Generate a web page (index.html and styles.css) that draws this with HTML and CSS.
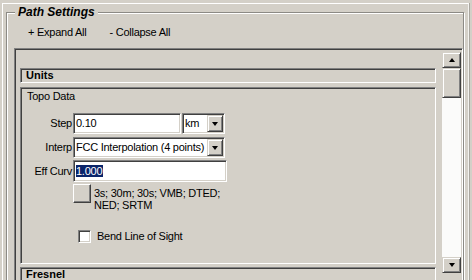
FILE: index.html
```html
<!DOCTYPE html>
<html>
<head>
<meta charset="utf-8">
<link rel="stylesheet" href="styles.css">
</head>
<body>
<div class="window">
  <div class="group">
    <div class="legend">Path Settings</div>
    <div class="actions">
      <span class="action">+ Expand All</span>
      <span class="action">- Collapse All</span>
    </div>
    <div class="panel">
      <div class="content">
        <div class="bar">Units</div>
        <div class="section">
          <div class="section-title">Topo Data</div>
          <div class="form">
            <div class="row">
              <span class="lbl">Step</span>
              <div class="edit step">0.10</div>
              <div class="combo km"><span class="val">km</span><span class="drop"><i class="arrow-down"></i></span></div>
            </div>
            <div class="row">
              <span class="lbl">Interp</span>
              <div class="combo interp"><span class="val">FCC Interpolation (4 points)</span><span class="drop"><i class="arrow-down"></i></span></div>
            </div>
            <div class="row row-curv">
              <span class="lbl">Eff Curv</span>
              <div class="edit curv"><span class="sel">1.000</span></div>
            </div>
          </div>
          <div class="btn-row">
            <div class="sqbtn"></div>
            <div class="btn-text">3s; 30m; 30s; VMB; DTED;<br>NED; SRTM</div>
          </div>
          <div class="check-row">
            <span class="checkbox"></span>
            <span class="check-label">Bend Line of Sight</span>
          </div>
        </div>
        <div class="bar">Fresnel</div>
      </div>
      <div class="scrollbar">
        <div class="sb-btn"><i class="arrow-up"></i></div>
        <div class="sb-thumb"></div>
        <div class="sb-track"></div>
        <div class="sb-btn"><i class="arrow-down"></i></div>
      </div>
    </div>
  </div>
</div>
</body>
</html>
```
FILE: styles.css
```css
html, body {
  margin: 0;
  padding: 0;
}
body {
  width: 472px;
  height: 280px;
  overflow: hidden;
  background: #d4d0c8;
  font-family: "Liberation Sans", Arial, sans-serif;
  font-size: 11px;
  line-height: 13px;
  letter-spacing: -0.25px;
  color: #000;
}
.window {
  margin: 3px 3px 0 2px;
  border-top: 1px solid #fff;
  border-left: 1px solid #fff;
  border-right: 1px solid #f4f3f0;
  box-shadow: 1px 0 0 #a9a69f;
  height: 300px;
}
.group {
  position: relative;
  margin: 8px 4px 0 3px;
  border: 1px solid #8c8a85;
  box-shadow: inset 1px 1px 0 #fff, 1px 1px 0 #fff;
  padding-top: 13px;
  height: 300px;
}
.legend {
  position: absolute;
  left: 8px;
  top: -8px;
  padding: 0 3px;
  background: #d4d0c8;
  font-size: 12px;
  line-height: 14px;
  font-weight: bold;
  font-style: italic;
  letter-spacing: 0;
}
.actions {
  display: flex;
  gap: 23px;
  padding-left: 21px;
}
.panel {
  display: flex;
  margin: 9px 0 0 7px;
  padding: 1px;
  border: 1px solid;
  border-color: #808080 #fff #fff #808080;
  box-shadow: inset 1px 1px 0 #404040, inset -1px -1px 0 #d4d0c8;
  height: 260px;
}
.content {
  flex: 1;
  padding: 18px 6px 0 4px;
}
.bar, .section {
  border: 1px solid;
  border-color: #808080 #fff #fff #808080;
  box-shadow: inset 1px 1px 0 #404040;
}
.bar {
  height: 13px;
  padding-left: 5px;
  font-weight: bold;
  letter-spacing: 0;
}
.section {
  margin: 4px 0 3px;
  padding: 2px 0 20px 0;
}
.section-title {
  padding-left: 6px;
}
.form {
  margin-top: 10px;
  display: flex;
  flex-direction: column;
}
.row {
  display: flex;
  align-items: center;
  height: 21px;
}
.row + .row {
  margin-top: 3px;
}
.row-curv {
  height: 22px;
}
.row + .row-curv {
  margin-top: 2px;
}
.lbl {
  width: 51px;
  padding-right: 1px;
  text-align: right;
}
.edit, .combo {
  box-sizing: border-box;
  height: 100%;
  background: #fff;
  border: 1px solid;
  border-color: #808080 #fff #fff #808080;
  box-shadow: inset 1px 1px 0 #404040, inset -1px -1px 0 #d4d0c8;
  padding: 1px 1px 1px 2px;
  line-height: 17px;
  white-space: nowrap;
}
.step { width: 108px; }
.km { width: 43px; margin-left: 1px; }
.interp { width: 152px; }
.curv { width: 154px; line-height: 18px; }
.combo {
  display: flex;
  padding-right: 1px;
}
.combo .val {
  flex: 1;
  overflow: hidden;
}
.drop {
  box-sizing: border-box;
  width: 16px;
  height: 100%;
  display: flex;
  align-items: center;
  justify-content: center;
  background: #d4d0c8;
  border: 1px solid;
  border-color: #d4d0c8 #404040 #404040 #d4d0c8;
  box-shadow: inset 1px 1px 0 #fff, inset -1px -1px 0 #808080;
}
.arrow-down, .arrow-up {
  display: block;
  width: 0;
  height: 0;
  border-left: 3.5px solid transparent;
  border-right: 3.5px solid transparent;
}
.arrow-down { border-top: 4px solid #000; }
.arrow-up { border-bottom: 4px solid #000; }
.sel {
  background: #0a246a;
  color: #fff;
  padding: 0 1px 0 0;
}
.btn-row {
  display: flex;
  margin: 2px 0 0 52px;
}
.sqbtn {
  box-sizing: border-box;
  width: 18px;
  height: 19px;
  background: #d4d0c8;
  border: 1px solid;
  border-color: #fff #404040 #404040 #fff;
  box-shadow: inset -1px -1px 0 #808080;
}
.btn-text {
  margin: 3px 0 0 3px;
  line-height: 12px;
}
.check-row {
  display: flex;
  align-items: center;
  margin: 19px 0 0 57px;
  height: 13px;
}
.checkbox {
  box-sizing: border-box;
  width: 13px;
  height: 13px;
  background: #fff;
  border: 1px solid;
  border-color: #808080 #fff #fff #808080;
  box-shadow: inset 1px 1px 0 #404040, inset -1px -1px 0 #d4d0c8;
}
.check-label {
  margin-left: 6px;
}
.scrollbar {
  width: 19px;
  margin-top: 2px;
  display: flex;
  flex-direction: column;
  align-self: flex-start;
  height: 221px;
}
.sb-btn, .sb-thumb {
  box-sizing: border-box;
  background: #d4d0c8;
  border: 1px solid;
  border-color: #d4d0c8 #404040 #404040 #d4d0c8;
  box-shadow: inset 1px 1px 0 #fff, inset -1px -1px 0 #808080;
}
.sb-btn {
  height: 16px;
  display: flex;
  align-items: center;
  justify-content: center;
}
.sb-thumb {
  height: 30px;
}
.sb-track {
  flex: 1;
  background: #fbfbfa;
}
```
